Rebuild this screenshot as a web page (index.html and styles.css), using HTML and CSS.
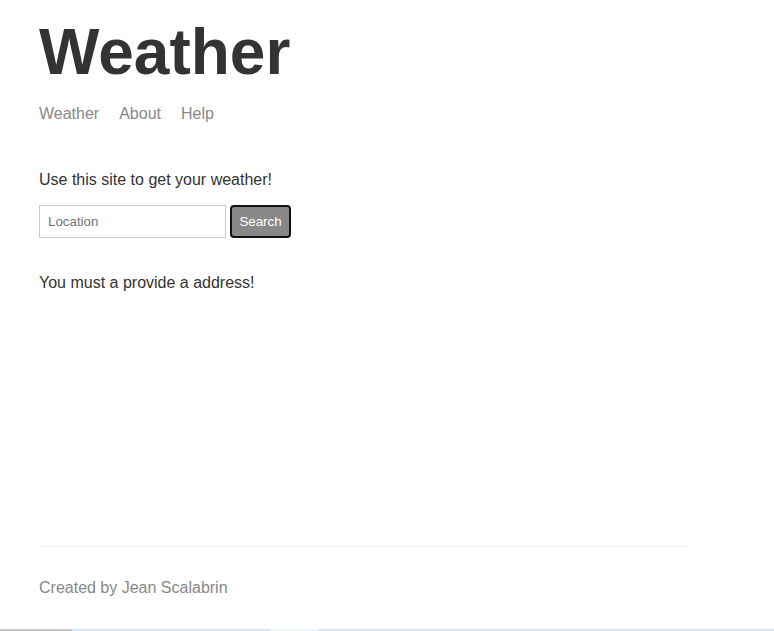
FILE: index.html
```html
<!DOCTYPE html>
<html lang="en">
<head>
<meta charset="utf-8">
<title>Weather</title>
<link rel="stylesheet" href="styles.css">
</head>
<body>
<div class="main-content">
  <header class="site-header">
    <h1 class="site-title">Weather</h1>
    <nav class="site-nav">
      <a href="#">Weather</a>
      <a href="#">About</a>
      <a href="#">Help</a>
    </nav>
  </header>
  <p class="intro">Use this site to get your weather!</p>
  <form class="search-form">
    <input class="search-input" type="text" placeholder="Location">
    <button class="search-button" type="button">Search</button>
  </form>
  <p class="message">You must a provide a address!</p>
</div>
<footer class="site-footer">
  <p class="footer-text">Created by Jean Scalabrin</p>
</footer>
<div class="taskbar-strip">
  <span class="strip-gray"></span>
  <span class="strip-blue strip-a"></span>
  <span class="strip-light"></span>
  <span class="strip-blue strip-b"></span>
</div>
</body>
</html>
```
FILE: styles.css
```css
html, body {
  margin: 0;
  padding: 0;
}

body {
  font-family: "Liberation Sans", Arial, sans-serif;
  color: #333333;
  background: #ffffff;
  width: 650px;
  padding-left: 39px;
  min-height: 631px;
  box-sizing: content-box;
  display: flex;
  flex-direction: column;
}

.main-content {
  flex-grow: 1;
}

.site-header {
  margin-bottom: 48px;
}

.site-title {
  font-size: 64px;
  font-weight: bold;
  margin: 15px 0 16px;
  line-height: normal;
}

.site-nav {
  display: flex;
  gap: 20px;
  font-size: 16px;
}

.site-nav a {
  color: #888888;
  text-decoration: none;
}

.intro {
  font-size: 16px;
  margin: 0 0 16px;
}

.search-form {
  display: flex;
  gap: 4px;
  align-items: stretch;
}

.search-input {
  box-sizing: border-box;
  width: 187px;
  height: 33px;
  border: 1px solid #cccccc;
  padding: 8px;
  font-family: "Liberation Sans", Arial, sans-serif;
  font-size: 13.33px;
  color: #333333;
  margin: 0;
  outline: none;
}

.search-input::placeholder {
  color: #757575;
}

.search-button {
  box-sizing: border-box;
  width: 61px;
  height: 33px;
  margin: 0;
  padding: 0;
  border: 2px solid #111111;
  border-radius: 4px;
  background: #888888;
  color: #ffffff;
  font-family: "Liberation Sans", Arial, sans-serif;
  font-size: 13.33px;
}

.message {
  font-size: 16px;
  margin: 36px 0 0;
}

.site-footer {
  color: #888888;
  border-top: 1px solid #eeeeee;
  padding: 16px 0 16px;
  margin-bottom: 2px;
}

.footer-text {
  margin: 16px 0;
  font-size: 16px;
}

.taskbar-strip {
  position: fixed;
  left: 0;
  right: 0;
  bottom: 0;
  height: 2px;
  display: flex;
}

.strip-gray {
  width: 72px;
  background: #c8c8c8;
}

.strip-blue {
  background: #d3e5f0;
}

.strip-a {
  width: 198px;
}

.strip-light {
  width: 48px;
  background: #edf4f8;
}

.strip-b {
  flex-grow: 1;
}
```
